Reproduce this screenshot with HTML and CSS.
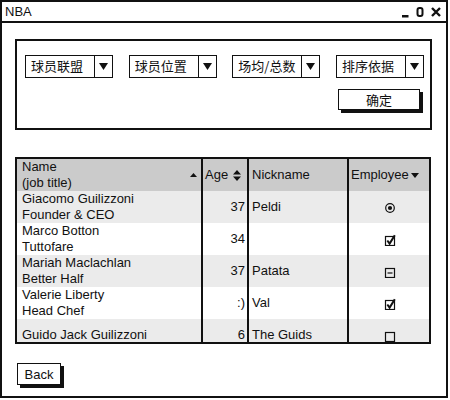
FILE: index.html
```html
<!DOCTYPE html>
<html lang="zh">
<head>
<meta charset="utf-8">
<title>NBA</title>
<link rel="stylesheet" href="styles.css">
</head>
<body>
<div class="window">
  <div class="titlebar">
    <span class="title">NBA</span>
    <svg class="controls" width="42" height="12" viewBox="0 0 42 12">
      <rect x="2" y="9" width="6.5" height="2.5" fill="#111"/>
      <rect x="17.5" y="2" width="5" height="8" rx="2" fill="none" stroke="#111" stroke-width="2"/>
      <path d="M32 2 L40 10 M40 2 L32 10" stroke="#111" stroke-width="2.4" fill="none"/>
    </svg>
  </div>
  <div class="content">
    <div class="panel">
      <div class="filters">
        <div class="select"><span class="select-label">球员联盟</span><span class="select-arrow"><svg width="9" height="7" viewBox="0 0 9 7"><path d="M0 0 H9 L4.5 7 Z" fill="#111"/></svg></span></div>
        <div class="select"><span class="select-label">球员位置</span><span class="select-arrow"><svg width="9" height="7" viewBox="0 0 9 7"><path d="M0 0 H9 L4.5 7 Z" fill="#111"/></svg></span></div>
        <div class="select"><span class="select-label">场均/总数</span><span class="select-arrow"><svg width="9" height="7" viewBox="0 0 9 7"><path d="M0 0 H9 L4.5 7 Z" fill="#111"/></svg></span></div>
        <div class="select"><span class="select-label">排序依据</span><span class="select-arrow"><svg width="9" height="7" viewBox="0 0 9 7"><path d="M0 0 H9 L4.5 7 Z" fill="#111"/></svg></span></div>
      </div>
      <div class="actions">
        <button class="btn confirm">确定</button>
      </div>
    </div>

    <div class="grid-wrap">
      <table class="grid">
        <thead>
          <tr>
            <th class="c-name"><div class="hcell"><span>Name<br>(job title)</span><svg width="7" height="4" viewBox="0 0 7 4"><path d="M0 4 H7 L3.5 0 Z" fill="#111"/></svg></div></th>
            <th class="c-age"><div class="hcell start"><span>Age</span><svg width="8" height="11" viewBox="0 0 8 11"><path d="M0 4.5 H8 L4 0 Z M0 6.5 H8 L4 11 Z" fill="#111"/></svg></div></th>
            <th class="c-nick">Nickname</th>
            <th class="c-emp"><div class="hcell start tight"><span>Employee</span><svg width="8" height="5" viewBox="0 0 8 5"><path d="M0 0 H8 L4 5 Z" fill="#111"/></svg></div></th>
          </tr>
        </thead>
        <tbody>
          <tr class="alt">
            <td class="c-name">Giacomo Guilizzoni<br>Founder &amp; CEO</td>
            <td class="c-age">37</td>
            <td class="c-nick">Peldi</td>
            <td class="c-emp"><svg class="ic" width="12" height="12" viewBox="0 0 12 12"><circle cx="6" cy="6" r="4.3" fill="none" stroke="#111" stroke-width="1.2"/><circle cx="6" cy="6" r="2.1" fill="#111"/></svg></td>
          </tr>
          <tr>
            <td class="c-name">Marco Botton<br>Tuttofare</td>
            <td class="c-age">34</td>
            <td class="c-nick"></td>
            <td class="c-emp"><svg class="ic" width="12" height="12" viewBox="0 0 12 12"><rect x="1.5" y="2.5" width="9" height="9" fill="none" stroke="#111" stroke-width="1.2"/><path d="M3.3 6.5 L5.6 9.6 L10.8 1.2" fill="none" stroke="#111" stroke-width="2"/></svg></td>
          </tr>
          <tr class="alt">
            <td class="c-name">Mariah Maclachlan<br>Better Half</td>
            <td class="c-age">37</td>
            <td class="c-nick">Patata</td>
            <td class="c-emp"><svg class="ic" width="12" height="12" viewBox="0 0 12 12"><rect x="1.5" y="2.5" width="9" height="9" fill="none" stroke="#111" stroke-width="1.2"/><path d="M3.5 7 H8.5" stroke="#111" stroke-width="1.2"/></svg></td>
          </tr>
          <tr>
            <td class="c-name">Valerie Liberty<br>Head Chef</td>
            <td class="c-age">:)</td>
            <td class="c-nick">Val</td>
            <td class="c-emp"><svg class="ic" width="12" height="12" viewBox="0 0 12 12"><rect x="1.5" y="2.5" width="9" height="9" fill="none" stroke="#111" stroke-width="1.2"/><path d="M3.3 6.5 L5.6 9.6 L10.8 1.2" fill="none" stroke="#111" stroke-width="2"/></svg></td>
          </tr>
          <tr class="alt">
            <td class="c-name">Guido Jack Guilizzoni</td>
            <td class="c-age">6</td>
            <td class="c-nick">The Guids</td>
            <td class="c-emp"><svg class="ic" width="12" height="12" viewBox="0 0 12 12"><rect x="1.5" y="2.5" width="9" height="9" fill="none" stroke="#111" stroke-width="1.2"/></svg></td>
          </tr>
        </tbody>
      </table>
    </div>

    <div class="footer">
      <button class="btn back">Back</button>
    </div>
  </div>
</div>
</body>
</html>
```

FILE: styles.css
```css
* {
  box-sizing: border-box;
}

body {
  margin: 0;
  background: #fff;
  color: #111;
  font-family: "Liberation Sans", "Noto Sans CJK SC", sans-serif;
}

.window {
  width: 448px;
  height: 398px;
  border: 2px solid #111;
  display: flex;
  flex-direction: column;
  background: #fff;
}

.titlebar {
  height: 21px;
  border-bottom: 2px solid #111;
  display: flex;
  align-items: center;
  justify-content: space-between;
  padding: 0 4px 0 3px;
}

.title {
  font-size: 13px;
}

.controls {
  display: block;
}

.content {
  flex: 1;
  display: flex;
  flex-direction: column;
  padding: 16px 14px 0 13px;
}

.panel {
  height: 91px;
  border: 2px solid #111;
  padding: 14px 6px 0 8px;
}

.filters {
  display: flex;
  justify-content: space-between;
}

.select {
  width: 88px;
  height: 23px;
  border: 1.5px solid #111;
  display: flex;
  background: #fff;
}

.select-label {
  flex: 1;
  padding-left: 5px;
  font-size: 13px;
  line-height: 20px;
  white-space: nowrap;
  overflow: hidden;
  border-right: 1.5px solid #111;
  font-family: "Noto Sans CJK SC", sans-serif;
}

.select-arrow {
  width: 17px;
  display: flex;
  align-items: center;
  justify-content: center;
}

.actions {
  display: flex;
  justify-content: flex-end;
  margin-top: 11px;
  padding-right: 4px;
}

.btn {
  background: #fff;
  border: 1.5px solid #111;
  box-shadow: 3px 3px 0 #111;
  color: #111;
  padding: 0;
  font-family: "Liberation Sans", "Noto Sans CJK SC", sans-serif;
  font-size: 13px;
}

.confirm {
  width: 82px;
  height: 21px;
}

.grid-wrap {
  margin-top: 27px;
  width: 416px;
  height: 187px;
  border: 2px solid #111;
  overflow: hidden;
}

.grid {
  width: 412px;
  border-collapse: separate;
  border-spacing: 0;
  table-layout: fixed;
  font-size: 13px;
  line-height: 16px;
}

.grid th,
.grid td {
  height: 32px;
  padding: 0;
  vertical-align: middle;
  white-space: nowrap;
  overflow: hidden;
}

.grid th {
  background: #cbcbcb;
  font-weight: normal;
  text-align: left;
}

.grid tr.alt td {
  background: #ebebeb;
}

.c-name {
  width: 184px;
  padding-left: 5px !important;
}

.c-age {
  width: 46px;
  border-left: 2px solid #111;
}

.c-nick {
  width: 100px;
  border-left: 2px solid #111;
  padding-left: 3px !important;
}

.c-emp {
  width: 82px;
  border-left: 2px solid #111;
}

.grid th.c-name {
  padding-right: 4px !important;
}

.grid th.c-age,
.grid th.c-emp {
  padding-left: 2px !important;
}

.grid td.c-age {
  text-align: right;
  padding-right: 2px !important;
}

.grid td.c-emp {
  text-align: center;
}

.hcell {
  display: flex;
  align-items: center;
  justify-content: space-between;
}

.hcell.start {
  justify-content: flex-start;
  gap: 5px;
}

.hcell.tight {
  gap: 2px;
}

.ic {
  display: inline-block;
  vertical-align: middle;
  margin-left: 1px;
}

.footer {
  margin-top: 19px;
  padding-left: 2px;
}

.back {
  width: 44px;
  height: 22px;
}
```
